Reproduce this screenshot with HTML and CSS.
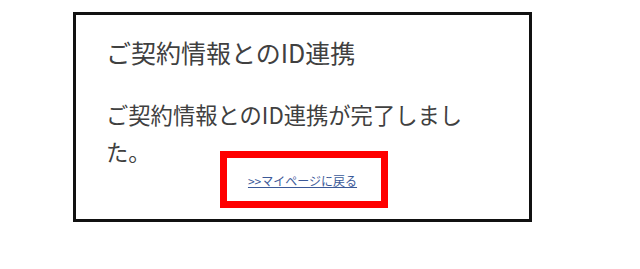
FILE: index.html
```html
<!DOCTYPE html>
<html lang="ja">
<head>
<meta charset="utf-8">
<title>ご契約情報とのID連携</title>
<link rel="stylesheet" href="styles.css">
</head>
<body>
<div class="page">
  <section class="card">
    <h1 class="card-title">ご契約情報とのID連携</h1>
    <p class="card-text">ご契約情報とのID連携が完了しました。</p>
    <div class="card-link-row">
      <a class="card-link" href="#">&gt;&gt;マイページに戻る</a>
    </div>
  </section>
  <div class="highlight"></div>
</div>
</body>
</html>
```
FILE: styles.css
```css
html, body {
  margin: 0;
  padding: 0;
  background: #ffffff;
}
body {
  font-family: "Noto Sans CJK JP", "Noto Sans", sans-serif;
  color: #333333;
}
.page {
  position: relative;
  width: 640px;
  height: 269px;
  padding-top: 12px;
  box-sizing: border-box;
}
.card {
  margin-left: 73px;
  width: 459px;
  box-sizing: border-box;
  border: 3px solid #111111;
  padding: 20px 30px 29px 30px;
  background: #ffffff;
}
.card-title {
  margin: 0;
  font-size: 25px;
  font-weight: 400;
  line-height: 34px;
  color: #404040;
}
.card-text {
  margin: 27px 0 0 0;
  max-width: 380px;
  font-size: 22.3px;
  line-height: 36.5px;
  color: #404040;
}
.card-link-row {
  display: flex;
  justify-content: center;
  margin-top: 3px;
}
.card-link {
  font-size: 12px;
  line-height: 18px;
  color: #3b5998;
  text-decoration: underline;
}
.highlight {
  position: absolute;
  left: 220px;
  top: 151px;
  width: 168px;
  height: 57px;
  box-sizing: border-box;
  border: 7px solid #ff0000;
}
```
